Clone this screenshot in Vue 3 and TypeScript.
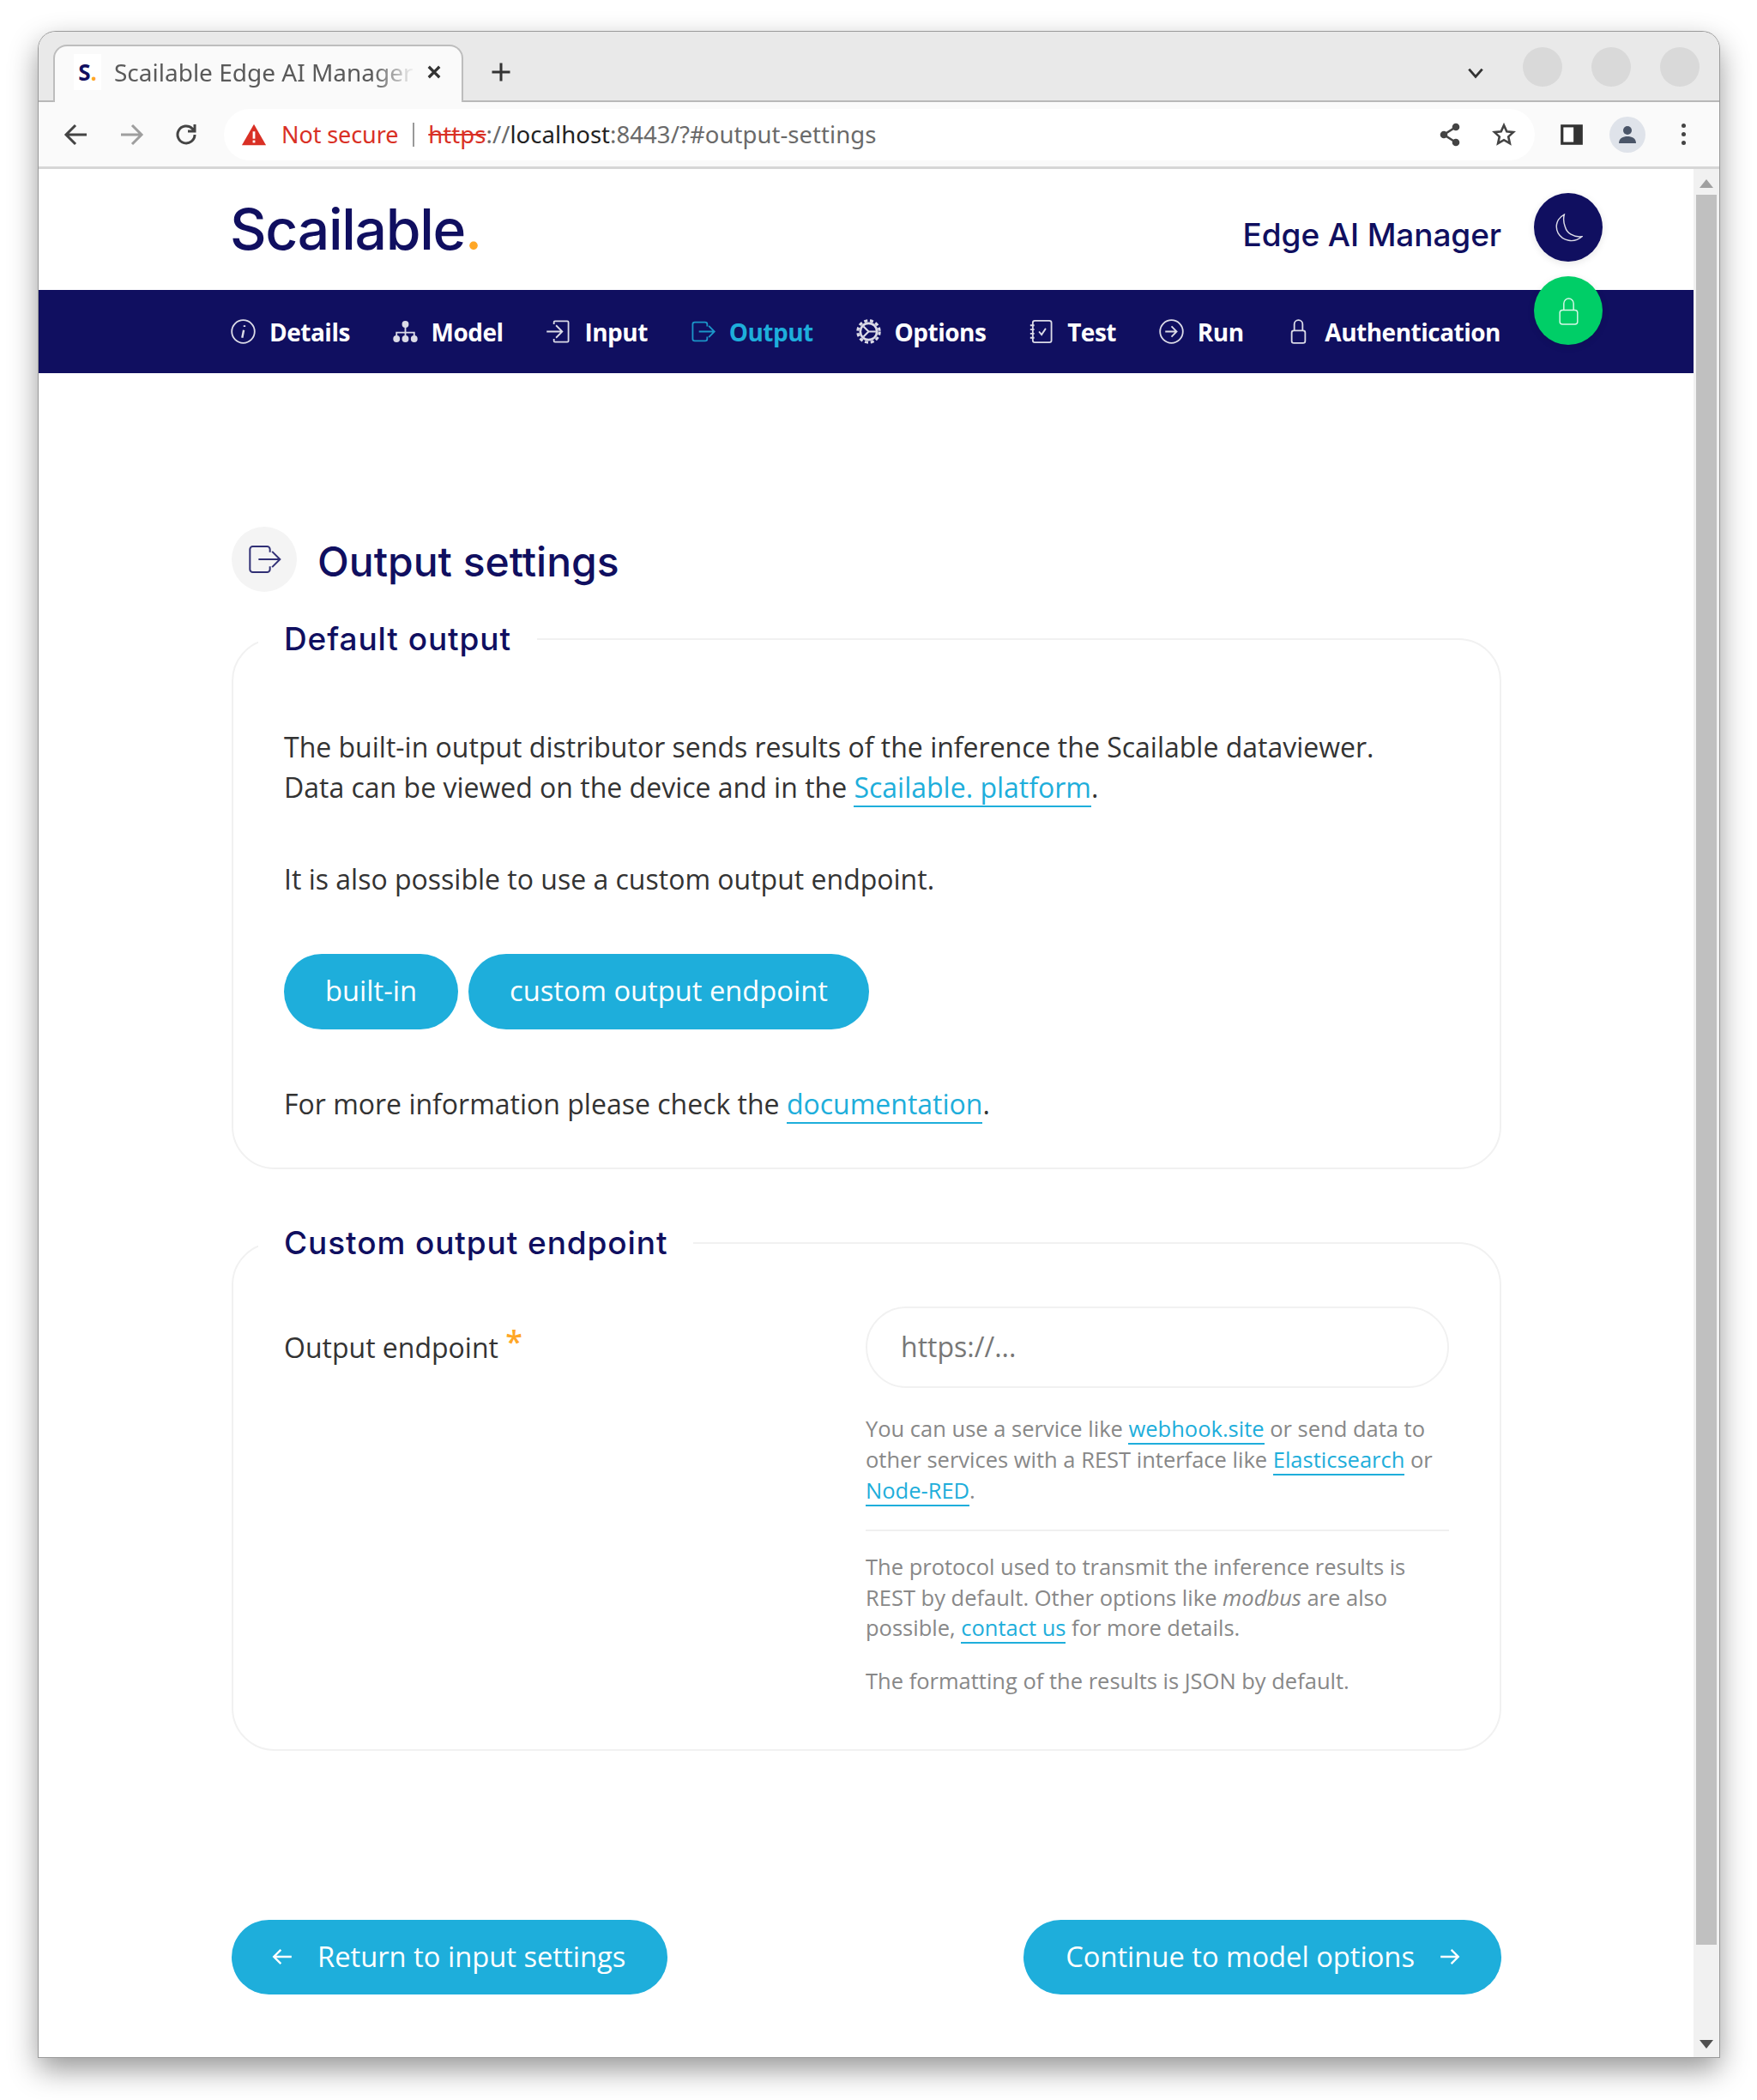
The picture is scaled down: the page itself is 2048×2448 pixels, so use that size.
<template>
  <div class="desk">
    <div class="window">
      <div class="tabstrip">
        <div class="tab">
          <span class="favicon">S<i>.</i></span>
          <span class="tab-title">Scailable Edge AI Manager</span>
          <svg class="tab-close" viewBox="0 0 16 16"><path d="M3 3l10 10M13 3L3 13" /></svg>
        </div>
        <svg class="new-tab" viewBox="0 0 24 24"><path d="M12 3v18M3 12h18" /></svg>
        <svg class="tab-list" viewBox="0 0 20 20"><path d="M3 6l7 8 7-8" /></svg>
        <div class="win-btns"><span></span><span></span><span></span></div>
      </div>

      <div class="toolbar">
        <svg class="tool" viewBox="0 0 32 32"><path d="M28 16H5M15 5L4 16l11 11" /></svg>
        <svg class="tool off" viewBox="0 0 32 32"><path d="M4 16h23M17 5l11 11-11 11" /></svg>
        <svg class="tool" viewBox="0 0 32 32"><path d="M26 16a10 10 0 1 1-3-7.200L26 12M26 4v8h-8" /></svg>
        <div class="omnibox">
          <svg class="warn" viewBox="0 0 32 32"><path d="M16 3L31 29H1z" fill="#d93025" /><rect x="14.500" y="12" width="3" height="9" fill="#fff" /><rect x="14.500" y="23" width="3" height="3" fill="#fff" /></svg>
          <span class="not-secure">Not secure</span>
          <span class="omni-sep"></span>
          <span class="url"><s>https</s><span class="url-dim">://</span><b>localhost</b><span class="url-dim">:8443/?#output-settings</span></span>
          <span class="omni-right">
            <svg class="tool-sm" viewBox="0 0 28 28"><path d="M21 5L7 14l14 9" /><circle cx="21" cy="5" r="3" fill="#444" /><circle cx="7" cy="14" r="3" fill="#444" /><circle cx="21" cy="23" r="3" fill="#444" /></svg>
            <svg class="tool-sm" viewBox="0 0 28 28"><path d="M14 3l3.300 7.300 7.700.8-5.800 5.300 1.700 7.800-6.900-4-6.900 4 1.700-7.800L3 11.100l7.700-.8z" /></svg>
          </span>
        </div>
        <svg class="side-panel" viewBox="0 0 28 28"><rect x="2" y="3" width="24" height="22" fill="#333" /><rect x="5" y="6" width="11" height="16" fill="#fff" /></svg>
        <span class="avatar">
          <svg viewBox="0 0 28 28"><circle cx="14" cy="9" r="5" fill="#4a5568" /><path d="M4 24c0-6 5-8 10-8s10 2 10 8z" fill="#4a5568" /></svg>
        </span>
        <span class="kebab"><i></i><i></i><i></i></span>
      </div>

      <div class="viewport">
        <div class="page">
          <header class="brand">
            <div class="logo">Scailable<span>.</span></div>
            <div class="app-name">Edge AI Manager</div>
          </header>

          <nav class="nav">
            <div class="nav-inner">
              <a v-for="item in navItems" :key="item.name" class="nav-item" :class="{ active: item.name === 'Output' }">
                <svg class="nav-icon" viewBox="0 0 24 24" v-html="item.icon"></svg>
                {{ item.name }}
              </a>
            </div>
          </nav>

          <button class="round moon">
            <svg viewBox="0 0 32 32"><path d="M11 1C3 5 0 14 4 22c5 9 18 12 27 4-10 1-17-4-19-11-2-5-2-10-1-14z" /></svg>
          </button>
          <button class="round lock">
            <svg viewBox="0 0 32 32"><path d="M10.500 15V7.500a5.500 5.500 0 0 1 11 0V15" /><rect x="6" y="15" width="20" height="16" rx="3" /></svg>
          </button>

          <main class="content">
            <div class="title-row">
              <span class="title-icon">
                <svg viewBox="0 0 24 24" v-html="outputIcon"></svg>
              </span>
              <h1>Output settings</h1>
            </div>

            <fieldset class="card">
              <legend>Default output</legend>
              <p>
                The built-in output distributor sends results of the inference the Scailable dataviewer.<br />
                Data can be viewed on the device and in the <a class="link">Scailable. platform</a>.
              </p>
              <p class="gap-60">It is also possible to use a custom output endpoint.</p>
              <div class="choice">
                <button class="pill">built-in</button>
                <button class="pill">custom output endpoint</button>
              </div>
              <p class="gap-63">For more information please check the <a class="link">documentation</a>.</p>
            </fieldset>

            <fieldset class="card second">
              <legend>Custom output endpoint</legend>
              <div class="form-row">
                <label>Output endpoint <span class="req">*</span></label>
                <div>
                  <div class="input">https://...</div>
                  <div class="help first">
                    You can use a service like <a class="link">webhook.site</a> or send data to other services with a REST interface like <a class="link">Elasticsearch</a> or <a class="link">Node-RED</a>.
                  </div>
                  <div class="rule"></div>
                  <div class="help tight">
                    The protocol used to transmit the inference results is REST by default. Other options like <em>modbus</em> are also possible, <a class="link">contact us</a> for more details.
                  </div>
                  <div class="help tight last">The formatting of the results is JSON by default.</div>
                </div>
              </div>
            </fieldset>

            <div class="pager">
              <button class="pill nav-btn back">
                <svg viewBox="0 0 24 24"><path d="M22 12H3M10.500 4.500L3 12l7.500 7.500" /></svg>
                Return to input settings
              </button>
              <button class="pill nav-btn next">
                Continue to model options
                <svg viewBox="0 0 24 24"><path d="M2 12h19M13.500 4.500L21 12l-7.500 7.500" /></svg>
              </button>
            </div>
          </main>
        </div>

        <div class="scrollbar">
          <span class="arrow up"></span>
          <span class="thumb"></span>
          <span class="arrow down"></span>
        </div>
      </div>
    </div>
  </div>
</template>

<script setup lang="ts">
const outputIcon =
  '<path d="M16 7V5a2 2 0 0 0-2-2H4a2 2 0 0 0-2 2v14a2 2 0 0 0 2 2h10a2 2 0 0 0 2-2v-2" /><path d="M8 12h15M17.500 6.500L23 12l-5.500 5.500" />'

const navItems = [
  { name: 'Details', icon: '<circle cx="12" cy="12" r="11" /><path d="M13.200 6v1.500M12.500 10.500L11 18" stroke-width="2" />' },
  { name: 'Model', icon: '<circle cx="12" cy="5" r="2.500" fill="currentColor" /><circle cx="3.500" cy="19" r="2.500" fill="currentColor" /><circle cx="12" cy="19" r="2.500" fill="currentColor" /><circle cx="20.500" cy="19" r="2.500" fill="currentColor" /><path d="M12 7v10M3.500 17v-4h17v4" />' },
  { name: 'Input', icon: '<path d="M8 5V3a1 1 0 0 1 1-1h12a1 1 0 0 1 1 1v18a1 1 0 0 1-1 1H9a1 1 0 0 1-1-1v-2M1 12h14M10 6l6 6-6 6" />' },
  { name: 'Output', icon: outputIcon },
  { name: 'Options', icon: '<circle cx="12" cy="12" r="8" stroke-width="2.200" /><circle cx="12" cy="12" r="10.500" stroke-width="2.600" stroke-dasharray="3.300 2.300" /><path d="M12 12h7M12 12L7 7M12 12l-5 5" stroke-width="1.800" />' },
  { name: 'Test', icon: '<rect x="4" y="1.500" width="18" height="21" rx="2" /><path d="M1.500 6h4M1.500 10h4M1.500 14h4M1.500 18h4M10 12l2.500 3 4-6" />' },
  { name: 'Run', icon: '<circle cx="12" cy="12" r="11" /><path d="M6 12h11M12 7l5 5-5 5" />' },
  { name: 'Authentication', icon: '<path d="M8 11V5a4 4 0 0 1 8 0v6" /><rect x="5.500" y="11" width="13" height="12" rx="2" />' },
]
</script>

<style>
html,
body {
  margin: 0;
  background: #fff;
}
</style>

<style scoped>
.desk {
  width: 2048px;
  height: 2448px;
  box-sizing: border-box;
  padding: 37px 44px 50px 45px;
  font-family: "Open Sans", "Noto Sans", sans-serif;
  color: #333;
}

.window {
  height: 2361px;
  display: flex;
  flex-direction: column;
  background: #fff;
  border-radius: 20px 20px 0 0;
  box-shadow: 0 0 0 1px #9a9a9a, 0 14px 34px rgba(0, 0, 0, 0.42);
  overflow: hidden;
}

.tabstrip {
  height: 82px;
  box-sizing: border-box;
  display: flex;
  align-items: flex-end;
  padding-left: 17px;
  background: #e9e9e9;
  border-bottom: 2px solid #b8b8b8;
}

.tab {
  width: 478px;
  height: 67px;
  margin-bottom: -2px;
  box-sizing: border-box;
  display: flex;
  align-items: center;
  padding: 0 22px 6px 22px;
  background: #fafafa;
  border: 2px solid #bdbdbd;
  border-bottom: none;
  border-radius: 16px 16px 0 0;
}

.favicon {
  width: 32px;
  height: 42px;
  background: #fff;
  color: #100f60;
  font: 700 26px/42px "Open Sans", sans-serif;
  text-align: center;
  flex: none;
}

.favicon i {
  font-style: normal;
  color: #ffa726;
}

.tab-title {
  flex: 1;
  margin-left: 15px;
  font: 400 28px/40px "Noto Sans", sans-serif;
  color: #5a5a5a;
  white-space: nowrap;
  overflow: hidden;
  -webkit-mask-image: linear-gradient(to right, #000 86%, transparent 100%);
  mask-image: linear-gradient(to right, #000 86%, transparent 100%);
}

.tab-close {
  width: 20px;
  height: 20px;
  margin-left: 12px;
  fill: none;
  stroke: #333;
  stroke-width: 2.600;
}

.new-tab {
  width: 28px;
  height: 28px;
  margin: 0 0 19px 30px;
  fill: none;
  stroke: #333;
  stroke-width: 2.600;
}

.tab-list {
  width: 22px;
  height: 22px;
  margin: 0 0 21px auto;
  fill: none;
  stroke: #333;
  stroke-width: 2.600;
}

.win-btns {
  display: flex;
  gap: 34px;
  margin: 0 23px 16px 44px;
}

.win-btns span {
  width: 46px;
  height: 46px;
  border-radius: 50%;
  background: #d9d9d9;
}

.toolbar {
  height: 78px;
  box-sizing: border-box;
  display: flex;
  align-items: center;
  padding-left: 28px;
  background: #fafafa;
  border-bottom: 3px solid #d6d6d6;
}

.tool {
  width: 32px;
  height: 32px;
  margin-right: 32px;
  flex: none;
  fill: none;
  stroke: #444;
  stroke-width: 3;
}

.tool.off {
  stroke: #9e9e9e;
}

.omnibox {
  width: 1528px;
  height: 60px;
  margin-left: -4px;
  flex: none;
  box-sizing: border-box;
  display: flex;
  align-items: center;
  padding: 0 22px 0 20px;
  background: #fff;
  border-radius: 30px;
  font: 400 27px/40px "Noto Sans", sans-serif;
}

.warn {
  width: 30px;
  height: 30px;
  flex: none;
}

.not-secure {
  margin-left: 17px;
  color: #d93025;
  letter-spacing: -0.1px;
}

.omni-sep {
  width: 2px;
  height: 28px;
  margin: 0 16px 0 17px;
  background: #999;
}

.url {
  color: #222;
  font-size: 27.500px;
  letter-spacing: 0.05px;
  white-space: nowrap;
}

.url s {
  color: #d93025;
}

.url b {
  font-weight: 400;
}

.url-dim {
  color: #6a6a6a;
}

.omni-right {
  display: flex;
  gap: 35px;
  margin-left: auto;
}

.tool-sm {
  width: 28px;
  height: 28px;
  fill: none;
  stroke: #444;
  stroke-width: 2.600;
}

.side-panel {
  width: 30px;
  height: 30px;
  margin-left: 28px;
  flex: none;
}

.avatar {
  width: 42px;
  height: 42px;
  margin-left: 29px;
  flex: none;
  border-radius: 50%;
  background: #dfe3ea;
  display: flex;
  align-items: center;
  justify-content: center;
}

.avatar svg {
  width: 28px;
  height: 28px;
}

.kebab {
  margin-left: 42px;
  display: flex;
  flex-direction: column;
  gap: 5px;
}

.kebab i {
  width: 5px;
  height: 5px;
  border-radius: 50%;
  background: #444;
}

.viewport {
  flex: 1;
  min-height: 0;
  display: flex;
}

.page {
  flex: 1;
  position: relative;
}

.brand {
  height: 141px;
  box-sizing: border-box;
  display: flex;
  align-items: center;
  justify-content: space-between;
  padding: 0 224px 0 225px;
}

.logo {
  margin-left: -2px;
  margin-bottom: 2px;
  font: 500 66px/80px Inter, sans-serif;
  color: #100f60;
  letter-spacing: -1.300px;
}

.logo span {
  color: #ffa726;
}

.app-name {
  margin-top: 12px;
  font: 500 37px/50px Inter, sans-serif;
  color: #100f60;
  letter-spacing: -0.100px;
}

.nav {
  height: 97px;
  display: flex;
  align-items: center;
  background: #100f60;
  padding: 0 225px 0 224px;
}

.nav-inner {
  flex: 1;
  display: flex;
  justify-content: space-between;
}

.nav-item {
  display: flex;
  align-items: center;
  gap: 16px;
  font-size: 28px;
  font-weight: 700;
  line-height: 40px;
  color: #fff;
  letter-spacing: -0.5px;
}

.nav-item.active {
  color: #1eaedb;
}

.nav-icon {
  width: 29px;
  height: 29px;
  fill: none;
  stroke: currentColor;
  stroke-width: 1.500;
  opacity: 0.85;
}

.round {
  position: absolute;
  left: 1743px;
  width: 80px;
  height: 80px;
  padding: 0;
  border: none;
  border-radius: 50%;
  display: flex;
  align-items: center;
  justify-content: center;
  box-shadow: 0 2px 8px rgba(0, 0, 0, 0.1);
}

.round svg {
  width: 33px;
  height: 33px;
  fill: none;
  stroke: #fff;
  stroke-width: 1.400;
  opacity: 0.85;
}

.moon {
  top: 28px;
  background: #100f60;
}

.lock {
  top: 125px;
  background: #00ce67;
}

.content {
  padding: 179px 224px 0 225px;
}

.title-row {
  display: flex;
  align-items: center;
  gap: 24px;
  margin-bottom: 29px;
}

.title-icon {
  width: 76px;
  height: 76px;
  border-radius: 50%;
  background: #f4f4f4;
  display: flex;
  align-items: center;
  justify-content: center;
}

.title-icon svg {
  width: 40px;
  height: 40px;
  fill: none;
  stroke: #100f60;
  stroke-width: 1.200;
  opacity: 0.85;
}

h1 {
  margin: 6px 0 0;
  font: 500 48px/60px Inter, sans-serif;
  color: #100f60;
}

.card {
  margin: 0;
  padding: 76px 59px 51px 59px;
  border: 2px solid #f1f1f1;
  border-radius: 50px;
  min-width: 0;
}

.card.second {
  margin-top: 60px;
  padding: 48px 59px 62px 59px;
}

legend {
  margin-left: -30px;
  padding: 0 30px;
  font: 500 37px/52px Inter, sans-serif;
  color: #100f60;
  letter-spacing: 0.900px;
}

p {
  margin: 0;
  font-size: 32px;
  line-height: 47px;
}

.gap-60 {
  margin-top: 60px;
}

.gap-63 {
  margin-top: 63px;
}

.link {
  color: #1eaedb;
  border-bottom: 2px solid #1eaedb;
}

.choice {
  display: flex;
  gap: 12px;
  margin-top: 64px;
}

.pill {
  height: 88px;
  padding: 0 48px 2px;
  border: none;
  border-radius: 44px;
  background: #1eaedb;
  color: #fff;
  font: 400 32.700px/40px "Open Sans", sans-serif;
}

.form-row {
  display: grid;
  grid-template-columns: 678px 1fr;
}

label {
  padding-top: 23px;
  font-size: 32px;
  line-height: 47px;
}

.req {
  position: relative;
  top: -6px;
  font-size: 36px;
  font-weight: 600;
  color: #ffa726;
}

.input {
  height: 95px;
  box-sizing: border-box;
  padding: 0 39px;
  border: 2px solid #f1f1f1;
  border-radius: 48px;
  font-size: 32px;
  line-height: 89px;
  color: #777;
}

.help {
  font-size: 25.500px;
  line-height: 36px;
  color: #888;
}

.help.first {
  margin-top: 29px;
}

.help.tight {
  line-height: 35.500px;
}

.help.last {
  margin-top: 26px;
}

.rule {
  height: 2px;
  margin: 28px 0 24px;
  background: #f0f0f0;
}

.pager {
  display: flex;
  justify-content: space-between;
  margin-top: 197px;
}

.nav-btn {
  height: 87px;
  display: flex;
  align-items: center;
  gap: 28px;
}

.nav-btn.back {
  padding: 0 49px 2px 46px;
}

.nav-btn.next {
  padding: 0 47px 2px 49px;
}

.nav-btn svg {
  width: 26px;
  height: 26px;
  fill: none;
  stroke: #fff;
  stroke-width: 2.200;
}

.scrollbar {
  width: 30px;
  flex: none;
  display: flex;
  flex-direction: column;
  align-items: center;
  background: #f1f1f1;
}

.arrow {
  width: 0;
  height: 0;
  border-left: 8px solid transparent;
  border-right: 8px solid transparent;
}

.arrow.up {
  margin: 12px 0 8px;
  border-bottom: 10px solid #a0a0a0;
}

.arrow.down {
  margin: auto 0 10px;
  border-top: 10px solid #505050;
}

.thumb {
  width: 24px;
  height: 2040px;
  background: #c0c0c0;
}
</style>
